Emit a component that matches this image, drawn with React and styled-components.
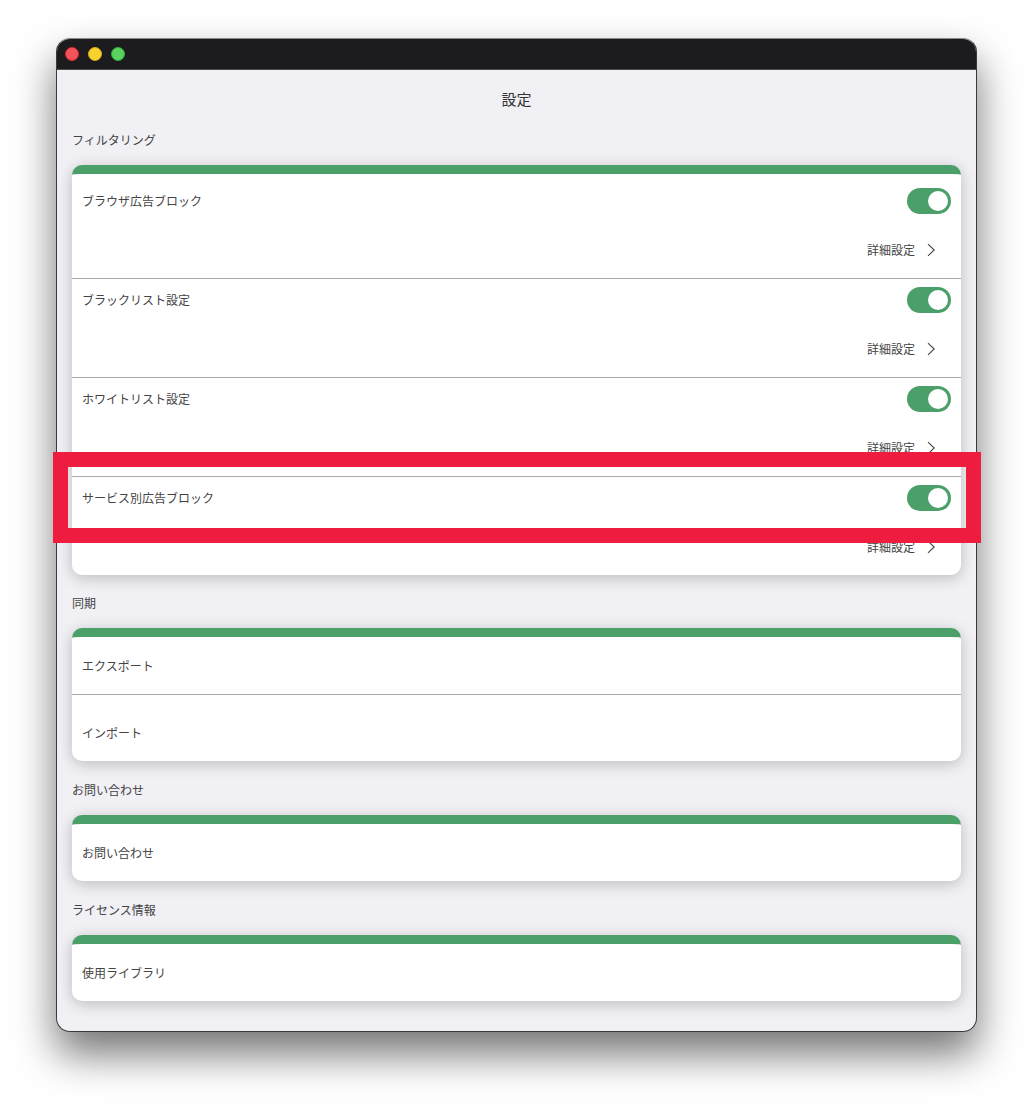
import React from 'react';
import styled, { createGlobalStyle } from 'styled-components';

const sections = [
  {
    title: 'フィルタリング',
    gap: 0,
    rows: [
      { label: 'ブラウザ広告ブロック', toggle: true },
      { label: 'ブラックリスト設定', toggle: true },
      { label: 'ホワイトリスト設定', toggle: true },
      { label: 'サービス別広告ブロック', toggle: true },
    ],
  },
  { title: '同期', gap: 18, rows: [{ label: 'エクスポート' }, { label: 'インポート' }] },
  { title: 'お問い合わせ', gap: 19, rows: [{ label: 'お問い合わせ' }] },
  { title: 'ライセンス情報', gap: 19, rows: [{ label: '使用ライブラリ' }] },
];

const lights = ['#f4535b', '#f8d22f', '#5ad35f'];
const lightRings = ['#d8272f', '#d9a91b', '#2fae38'];

const App = () => (
  <Page>
    <GlobalStyle />
    <Window>
      <TitleBar>
        {lights.map((color, i) => (
          <Light key={color} $color={color} $ring={lightRings[i]} />
        ))}
      </TitleBar>
      <Content>
        <Heading>設定</Heading>
        {sections.map((section) => (
          <Section key={section.title} $gap={section.gap}>
            <SectionLabel>{section.title}</SectionLabel>
            <Card>
              {section.rows.map((row) =>
                row.toggle ? (
                  <ToggleRow key={row.label}>
                    <RowTop>
                      <RowLabel>{row.label}</RowLabel>
                      <Toggle />
                    </RowTop>
                    <DetailLink>
                      <span>詳細設定</span>
                      <svg width="9" height="14" viewBox="0 0 9 14" fill="none">
                        <path d="M1 1.2l6.2 5.8-6.2 5.8" stroke="#444" strokeWidth="1.1" />
                      </svg>
                    </DetailLink>
                  </ToggleRow>
                ) : (
                  <PlainRow key={row.label}>
                    <RowLabel>{row.label}</RowLabel>
                  </PlainRow>
                )
              )}
            </Card>
          </Section>
        ))}
      </Content>
    </Window>
    <Highlight />
  </Page>
);

export default App;

const GlobalStyle = createGlobalStyle`
  html, body {
    margin: 0;
    background: #fff;
  }
  body {
    font-family: "Noto Sans CJK JP", "Noto Sans", sans-serif;
  }
`;

const Page = styled.div`
  position: relative;
  width: 1033px;
  height: 1105px;
  padding: 38px 56px 0;
  box-sizing: border-box;
  overflow: hidden;
`;

const Window = styled.div`
  width: 921px;
  height: 994px;
  box-sizing: border-box;
  border: 1px solid #3a3a3a;
  border-top-color: #8a8a8a;
  border-radius: 14px;
  overflow: hidden;
  background: #f0f0f5;
  box-shadow: 0 22px 42px rgba(0, 0, 0, 0.55);
`;

const TitleBar = styled.div`
  height: 31px;
  display: flex;
  align-items: center;
  gap: 9px;
  padding-left: 8px;
  box-sizing: border-box;
  background: #1c1c1e;
  border-bottom: 1px solid #4a4a4a;
`;

const Light = styled.span`
  width: 14px;
  height: 14px;
  box-sizing: border-box;
  border-radius: 50%;
  background: ${(p) => p.$color};
  border: 1px solid ${(p) => p.$ring};
`;

const Content = styled.div`
  padding: 19px 15px 0;
`;

const Heading = styled.h1`
  margin: 0 0 21px;
  height: 20px;
  font-size: 15px;
  font-weight: 400;
  line-height: 20px;
  text-align: center;
  color: #333;
`;

const Section = styled.section`
  margin-top: ${(p) => p.$gap}px;
`;

const SectionLabel = styled.div`
  height: 20px;
  margin-bottom: 15px;
  font-size: 12px;
  line-height: 20px;
  color: #444;
`;

const Card = styled.div`
  padding-top: 5px;
  border-top: 9px solid #4ba069;
  border-radius: 10px;
  background: #fff;
  box-shadow: 0 3px 15px rgba(0, 0, 0, 0.22);
`;

const ToggleRow = styled.div`
  padding: 8px 10px 18px;
  border-top: 1px solid #a9a9a9;

  &:first-child {
    border-top-color: transparent;
  }
`;

const RowTop = styled.div`
  display: flex;
  align-items: center;
  justify-content: space-between;
  height: 26px;
`;

const RowLabel = styled.div`
  font-size: 12px;
  line-height: 20px;
  color: #444;
`;

const Toggle = styled.div`
  position: relative;
  width: 44px;
  height: 26px;
  border-radius: 13px;
  background: #4ba069;

  &::after {
    content: '';
    position: absolute;
    top: 3px;
    right: 3px;
    width: 20px;
    height: 20px;
    border-radius: 50%;
    background: #fff;
  }
`;

const DetailLink = styled.div`
  display: flex;
  align-items: center;
  justify-content: flex-end;
  gap: 12px;
  height: 20px;
  margin-top: 26px;
  padding-right: 15px;
  font-size: 12px;
  line-height: 20px;
  color: #444;
`;

const PlainRow = styled.div`
  padding: 13px 10px 18px;
  border-top: 1px solid transparent;

  & + & {
    padding-top: 28px;
    border-top-color: #a9a9a9;
  }
`;

const Highlight = styled.div`
  position: absolute;
  top: 452px;
  left: 53px;
  width: 928px;
  height: 91px;
  box-sizing: border-box;
  border: 15px solid #ee1c3f;
`;
